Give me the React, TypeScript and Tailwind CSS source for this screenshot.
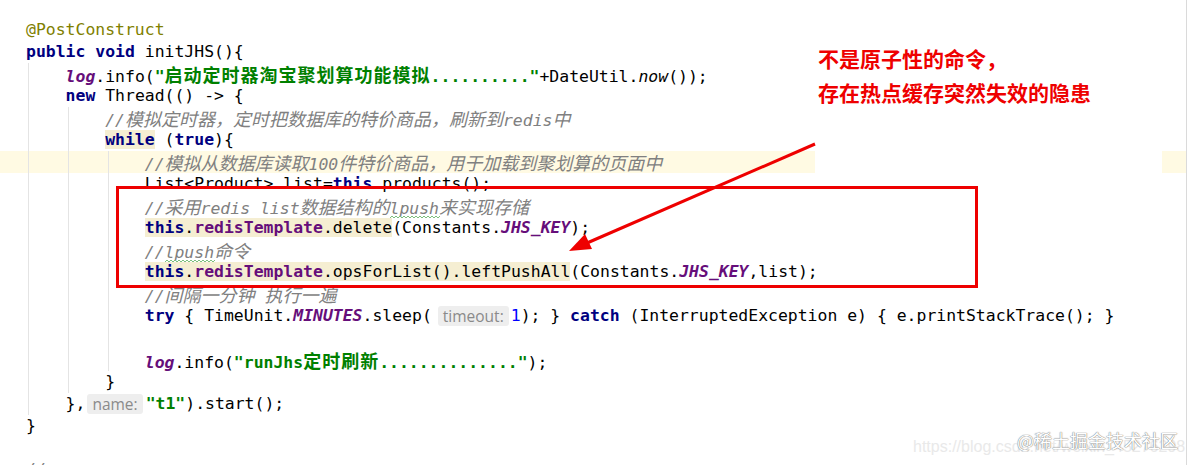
import React from 'react';

const KW = 'font-bold text-[#000080]';
const ANN = 'text-[#808000]';
const STR = 'font-bold text-[#008000]';
const CMT = 'italic text-[#808080]';
const FLD = 'font-bold text-[#660e7a]';
const SFLD = 'font-bold italic text-[#660e7a]';
const SMETH = 'italic';
const NUM = 'text-[#0000ff]';
const HL = 'bg-[#f5eed2]';

type Tok = string | [string, string] | [string, string, 'typo'] | { hint: string; ml: string };

const CJK = /([\u3000-\u303f\u4e00-\u9fff\uff00-\uffef]+)/;

const Seg: React.FC<{ text: string; cls?: string }> = ({ text, cls }) => {
  const parts = text.split(CJK).filter(Boolean);
  const bold = cls ? cls.includes('font-bold') : false;
  return (
    <span className={cls}>
      {parts.map((p, i) =>
        CJK.test(p) ? (
          <span key={i} className={`font-['Noto_Sans_CJK_SC',sans-serif] text-[18px] ${bold ? 'tracking-[1px]' : ''}`}>{p}</span>
        ) : (
          <React.Fragment key={i}>{p}</React.Fragment>
        )
      )}
    </span>
  );
};

// green squiggle of the spell checker
const Typo: React.FC<{ text: string; cls: string }> = ({ text, cls }) => {
  const w = Math.round(text.length * 9.9);
  let d = 'M0 3';
  for (let x = 0; x < w; x += 4) d += ` L${x + 2} 1 L${x + 4} 3`;
  return (
    <span className={`relative inline-block ${cls}`}>
      {text}
      <svg className="absolute left-0 top-[17px]" width={w} height="4" viewBox={`0 0 ${w} 4`}>
        <path d={d} stroke="#7cbf7c" strokeWidth="1" fill="none" />
      </svg>
    </span>
  );
};

const Hint: React.FC<{ label: string; ml: string }> = ({ label, ml }) => (
  <span className={`inline-block h-[20px] leading-[20px] align-top mt-[1px] rounded-[3px] bg-[#eeeeee] px-[5px] font-['Open_Sans',sans-serif] text-[15.5px] font-normal not-italic text-[#8a8a8a] ${ml}`}>
    {label}
  </span>
);

const lines: Tok[][] = [
  [['@PostConstruct', ANN]],
  [['public', KW], ' ', ['void', KW], ' initJHS(){'],
  ['    ', ['log', SFLD], '.info(', ['"启动定时器淘宝聚划算功能模拟.........."', STR], '+DateUtil.', ['now', SMETH], '());'],
  ['    ', ['new', KW], ' Thread(() -> {'],
  ['        ', ['//模拟定时器，定时把数据库的特价商品，刷新到redis中', CMT]],
  ['        ', ['while', KW + ' ' + HL], ' (', ['true', KW], '){'],
  ['            ', ['//模拟从数据库读取100件特价商品，用于加载到聚划算的页面中', CMT]],
  ['            List<Product> list=', ['this', KW], '.products();'],
  ['            ', ['//采用redis list数据结构的', CMT], ['lpush', CMT, 'typo'], ['来实现存储', CMT]],
  ['            ', ['this', KW + ' ' + HL], ['.', HL], ['redisTemplate', FLD + ' ' + HL], ['.delete', HL], '(Constants.', ['JHS_KEY', SFLD], ');'],
  ['            ', ['//', CMT], ['lpush', CMT, 'typo'], ['命令', CMT]],
  ['            ', ['this', KW + ' ' + HL], ['.', HL], ['redisTemplate', FLD + ' ' + HL], ['.opsForList().leftPushAll', HL], '(Constants.', ['JHS_KEY', SFLD], ',list);'],
  ['            ', ['//间隔一分钟 执行一遍', CMT]],
  ['            ', ['try', KW], ' { TimeUnit.', ['MINUTES', SFLD], '.sleep(', { hint: 'timeout:', ml: 'ml-[6px] mr-[2px]' }, ['1', NUM], '); } ', ['catch', KW], ' (InterruptedException e) { e.printStackTrace(); }'],
  [],
  ['            ', ['log', SFLD], '.info(', ['"runJhs定时刷新.............."', STR], ');'],
  ['        }'],
  ['    },', { hint: 'name:', ml: 'ml-[2px] mr-[3px]' }, ['"t1"', STR], ').start();'],
  ['}'],
  [],
  [['//', CMT]],
];

const CodeLine: React.FC<{ toks: Tok[]; current: boolean }> = ({ toks, current }) => (
  <div className={`h-[22px] leading-[22px] whitespace-pre pl-[26px] ${current ? 'bg-[#fffae3]' : ''}`}>
    {toks.map((t, i) => {
      if (typeof t === 'string') return <Seg key={i} text={t} />;
      if (Array.isArray(t)) {
        if (t.length === 3) return <Typo key={i} text={t[0]} cls={t[1]} />;
        return <Seg key={i} text={t[0]} cls={t[1]} />;
      }
      return <Hint key={i} label={t.hint} ml={t.ml} />;
    })}
  </div>
);

export default function App() {
  return (
    <div className="relative w-[1194px] h-[465px] overflow-hidden bg-white">
      <div className="flex h-full">
        <div className="relative w-[1187px] h-full border-r border-[#dadada] pt-[19px] font-['DejaVu_Sans_Mono',monospace] text-[16.45px] text-black">
          {lines.map((toks, i) => (
            <CodeLine key={i} toks={toks} current={i === 6} />
          ))}
          {/* indent guides */}
          <div className="absolute left-[28px] top-[63px] h-[352px] w-px bg-[#e4e4e4]" />
          <div className="absolute left-[68px] top-[107px] h-[286px] w-px bg-[#e4e4e4]" />
          <div className="absolute left-[108px] top-[151px] h-[220px] w-px bg-[#e4e4e4]" />
        </div>
      </div>

      {/* annotation text */}
      <div className="absolute left-[815px] top-[30px] w-[347px] h-[143px] bg-white pl-[3px] pt-[11px] font-['Noto_Sans_CJK_SC',sans-serif] text-[21px] font-bold leading-[34px] text-[#ee0000]">
        <div>不是原子性的命令，</div>
        <div>存在热点缓存突然失效的隐患</div>
      </div>

      {/* red box */}
      <div className="absolute left-[116px] top-[186px] w-[862px] h-[102px] border-[3px] border-[#ee0000]" />

      {/* arrow */}
      <svg className="absolute inset-0 pointer-events-none" width="1194" height="465" viewBox="0 0 1194 465">
        <line x1="815" y1="144" x2="587" y2="243" stroke="#ee0000" strokeWidth="3" />
        <polygon points="569,251 592,249 585,234" fill="#ee0000" />
      </svg>

      {/* watermark */}
      <div className="absolute left-[913px] top-[437px] font-['Liberation_Sans',sans-serif] text-[16px] leading-[20px] text-[#e9e9e9] whitespace-nowrap">
        https://blog.csdn.net/weixin_45276298
      </div>
      <div className="absolute left-[1017px] top-[428px] font-['Noto_Sans_CJK_SC',sans-serif] text-[18px] leading-[24px] text-white [text-shadow:0_0_1px_#777,0_0_1px_#777] whitespace-nowrap">
        @稀土掘金技术社区
      </div>
    </div>
  );
}
